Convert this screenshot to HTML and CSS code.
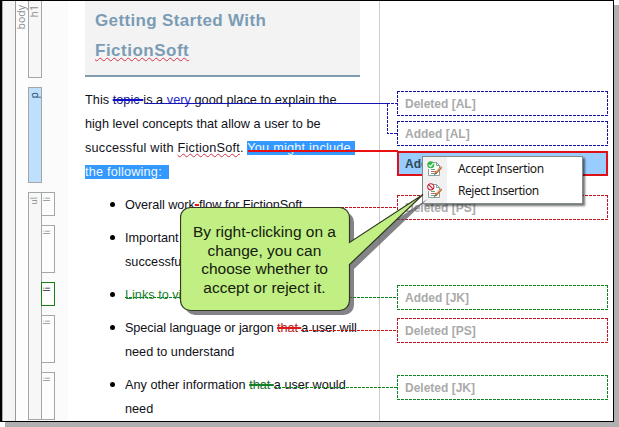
FILE: index.html
```html
<!DOCTYPE html>
<html lang="en">
<head>
<meta charset="utf-8">
<title>Getting Started With FictionSoft</title>
<link rel="stylesheet" href="styles.css">
</head>
<body>
<div class="window">
  <aside class="tags">
    <div class="edge"></div>
    <div class="tag-col body-col"><span class="tag">body</span></div>
    <div class="blocks">
      <div class="block h1"><span class="tag">h1</span></div>
      <div class="block p"><span class="tag">p</span></div>
      <div class="list-tags">
        <div class="block ul"><span class="tag">ul</span></div>
        <div class="items">
          <div class="block li"><span class="tag">li</span></div>
          <div class="block li tall"><span class="tag">li</span></div>
          <div class="block li changed"><span class="tag">li</span></div>
          <div class="block li tall"><span class="tag">li</span></div>
          <div class="block li tall"><span class="tag">li</span></div>
        </div>
      </div>
    </div>
  </aside>
  <main class="doc">
    <h1>Getting Started With<br><span class="product"><span class="spell">FictionSoft</span></span></h1>
    <p><span class="l1">This <s class="al">topic </s>is a <span class="ins-al">very</span> good place to explain the</span><br>high level concepts that allow a user to be<br><span class="l3">successful with <span class="spell">FictionSoft</span>. <mark>You might include&nbsp;</mark></span><br><mark class="l4">the following:&nbsp;&nbsp;</mark></p>
    <ul>
      <li class="i1">Overall work<s class="ps">-</s>flow for FictionSoft</li>
      <li>Important<br>successful</li>
      <li><span class="ins-jk">Links to vi</span></li>
      <li><span class="i4">Special language or jargon <s class="ps">that </s>a user will</span><br>need to understand</li>
      <li>Any other information <s class="jk">that </s>a user would<br>need</li>
    </ul>
  </main>
  <section class="notes">
    <div class="note blue">Deleted [AL]</div>
    <div class="note blue">Added [AL]</div>
    <div class="note active">Added [AL]</div>
    <div class="note red gap-l">Deleted [PS]</div>
    <div class="note green gap-xl">Added [JK]</div>
    <div class="note red gap-s">Deleted [PS]</div>
    <div class="note green gap-m">Deleted [JK]</div>
  </section>
</div>

<svg class="lines" width="619" height="427" viewBox="0 0 619 427" fill="none" shape-rendering="crispEdges">
  <path d="M145 103.5H387" stroke="#1414b4"/>
  <path d="M387 103.5H397M387.5 104V133.5H397" stroke="#1414b4" stroke-dasharray="3 1"/>
  <path d="M248 151H398" stroke="#e81010" stroke-width="2"/>
  <path d="M197 207.5H397" stroke="#c01420" stroke-dasharray="3 1"/>
  <path d="M125 297.5H397" stroke="#0c8420" stroke-dasharray="3 1"/>
  <path d="M301 330.5H397" stroke="#c81414" stroke-dasharray="3 1"/>
  <path d="M274 387.5H397" stroke="#0c8420" stroke-dasharray="3 1"/>
</svg>

<div class="menu">
  <div class="menu-item">
    <svg class="icon" viewBox="0 0 16 16" fill="none">
      <path d="M4.5 1.5H9.5L12.5 4.5V14.5H1.5V8" fill="#fff" stroke="#8aa0a0"/>
      <path d="M9.5 1.5V4.5H12.5" stroke="#8aa0a0"/>
      <path d="M4 8.5H8M4 12.5H9" stroke="#62a878"/><path d="M4 10.5H9" stroke="#c66"/>
      <circle cx="3.8" cy="3.8" r="3.5" fill="#35b44a"/>
      <path d="M2 4L3.5 5.5L6.5 2" stroke="#dfffe0" stroke-width="1.2"/>
      <path d="M8.5 12.5L14.5 6" stroke="#b46432" stroke-width="2.2"/>
      <path d="M9 11.5L14 6" stroke="#f5c684" stroke-width=".8"/>
      <path d="M7.5 13.8L8.7 12.4" stroke="#333"/>
    </svg>
    <span class="accept">Accept Insertion</span>
  </div>
  <div class="menu-item">
    <svg class="icon" viewBox="0 0 16 16" fill="none">
      <path d="M4.5 1.5H9.5L12.5 4.5V14.5H1.5V8" fill="#fff" stroke="#8aa0a0"/>
      <path d="M9.5 1.5V4.5H12.5" stroke="#8aa0a0"/>
      <path d="M4 8.5H8M4 12.5H9" stroke="#62a878"/><path d="M4 10.5H9" stroke="#c66"/>
      <circle cx="3.8" cy="3.8" r="3.1" fill="#fff" stroke="#c8283c" stroke-width="1.1"/>
      <path d="M1.7 1.7L6 6" stroke="#c8283c" stroke-width="1.2"/>
      <path d="M8.5 12.5L14.5 6" stroke="#b46432" stroke-width="2.2"/>
      <path d="M9 11.5L14 6" stroke="#f5c684" stroke-width=".8"/>
      <path d="M7.5 13.8L8.7 12.4" stroke="#333"/>
    </svg>
    <span class="reject">Reject Insertion</span>
  </div>
</div>

<div class="callout">
  <svg class="bubble" width="260" height="130" viewBox="0 0 260 130">
    <path transform="translate(4.5 4.5)" fill="#55555a" fill-opacity=".72" d="M10.5 14.5H159.5A10 10 0 0 1 169.5 24.5V49.5L243 1.5L169.5 71.5V107.5A10 10 0 0 1 159.5 117.5H10.5A10 10 0 0 1 .5 107.5V24.5A10 10 0 0 1 10.5 14.5Z"/>
    <path fill="#c1ef84" stroke="#2f3a20" stroke-width="1.2" d="M10.5 14.5H159.5A10 10 0 0 1 169.5 24.5V49.5L243 1.5L169.5 71.5V107.5A10 10 0 0 1 159.5 117.5H10.5A10 10 0 0 1 .5 107.5V24.5A10 10 0 0 1 10.5 14.5Z"/>
  </svg>
  <div class="callout-text">By right-clicking on a<br>change, you can<br>choose whether to<br>accept or reject it.</div>
</div>
</body>
</html>
```

FILE: styles.css
```css
* { box-sizing: border-box; }
body {
  margin: 0;
  width: 619px;
  height: 427px;
  overflow: hidden;
  position: relative;
  background: #fff;
  font-family: "Liberation Sans", Arial, sans-serif;
  color: #101018;
}
.window {
  width: 614px;
  height: 422px;
  display: flex;
  overflow: hidden;
  border: 1px solid #000;
  border-left-width: 2px;
  background: #fff;
  box-shadow: 5px 5px 0 #b0b0b0;
}

/* structure bars */
.tags { width: 66px; height: 420px; display: flex; flex: none; background: #fbfbfb; }
.edge { width: 14px; background: #f4f4f4; border-left: 1px solid #aaa; border-right: 1px solid #999; }
.tag {
  writing-mode: vertical-rl;
  transform: rotate(180deg);
  font: 10.5px/10px "Open Sans", sans-serif;
  color: #8c8c8c;
}
.body-col { width: 12px; padding-top: 4px; background: #fdfdfd; }
.blocks { width: 28px; display: flex; flex-direction: column; }
.block { width: 14px; padding-top: 4px; border: 1px solid #a2a8a5; background: #f7f7f7; line-height: 0; }
.h1 { height: 77px; border-top: 0; }
.p { height: 96px; margin-top: 9px; background: #bfdfff; }
.p .tag { color: #24486c; }
.list-tags { display: flex; margin-top: 9px; height: 228px; }
.ul { height: 228px; }
.ul .tag, .li .tag { font-size: 9px; line-height: 10px; }
.items { display: flex; flex-direction: column; gap: 9px; margin-left: -1px; }
.li { height: 24px; flex: none; background: #fdfdfd; }
.tall { height: 48px; }
.changed { border-color: #188018; background: #fff; }
.changed .tag { color: #222; }

/* document */
.doc { width: 311px; flex: none; padding-left: 17px; font-size: 12.7px; line-height: 24px; white-space: nowrap; }
h1 {
  width: 275px;
  height: 76px;
  margin: 0;
  padding: 5px 0 0 10px;
  border-bottom: 2px solid #7f9bae;
  background: #f3f3f3;
  color: #7b9cb5;
  font-size: 17px;
  line-height: 30px;
  letter-spacing: .35px;
}
.product { letter-spacing: .5px; }
.spell { text-decoration: underline wavy #d83048 1px; text-underline-offset: 1px; text-decoration-skip-ink: none; }
p { margin: 11px 0 0; }
.l1 { letter-spacing: .04px; }
.l3 { letter-spacing: .23px; }
.l4 { letter-spacing: .2px; }
.i1 { letter-spacing: -.06px; }
.i4 { letter-spacing: -.09px; }
mark { background: #3399ff; color: #f2f8ff; }
s { text-decoration-thickness: 2px; }
.al { text-decoration-color: #1010c8; color: #20208c; }
.ins-al { color: #2424c8; }
.ps { text-decoration-color: #e01818; color: #b02020; }
.jk { text-decoration-color: #148028; color: #246c30; }
.ins-jk { color: #208030; }
ul { margin: 9px 0 0; padding: 0 0 0 40px; display: flex; flex-direction: column; gap: 9px; list-style: none; }
li { position: relative; }
li::before { content: ""; position: absolute; left: -15px; top: 9px; width: 5px; height: 5px; border-radius: 50%; background: #000; }

/* change notes */
.notes { flex: 1; border-left: 1px solid #ccc; padding: 90px 5px 0 17px; display: flex; flex-direction: column; gap: 5px; }
.note {
  --line: #1414a0;
  --h: repeating-linear-gradient(90deg, var(--line) 0 3px, transparent 3px 4px);
  --v: repeating-linear-gradient(180deg, var(--line) 0 3px, transparent 3px 4px);
  height: 25px;
  flex: none;
  padding: 1px 0 0 8px;
  background: var(--h) 0 0 / 100% 1px no-repeat, var(--h) 0 100% / 100% 1px no-repeat, var(--v) 0 0 / 1px 100% no-repeat, var(--v) 100% 0 / 1px 100% no-repeat;
  color: #aaa;
  font: bold 12px/25px "Liberation Sans", Arial, sans-serif;
}
.red { --line: #c01420; }
.green { --line: #0c8420; }
.active { border: 2px solid #e01018; padding-left: 6px; line-height: 21px; background: #99ccff; color: #284858; }
.gap-l { margin-top: 14px; }
.gap-xl { margin-top: 60px; }
.gap-s { margin-top: 3px; }
.gap-m { margin-top: 27px; }

.lines { position: absolute; left: 0; top: 0; }

/* context menu */
.menu {
  position: absolute;
  left: 422px;
  top: 156px;
  width: 161px;
  height: 48px;
  padding: 1px 2px;
  border: 1px solid #7f8c8c;
  background: linear-gradient(90deg, #f1f1f1 24px, #fff 24px);
  box-shadow: 2px 2px 2px rgba(0, 0, 0, .55);
}
.menu-item { height: 22px; display: flex; align-items: center; gap: 15px; padding-left: 2px; font: 12px/22px "Noto Sans", sans-serif; color: #181818; }
.accept { letter-spacing: -.38px; }
.reject { letter-spacing: -.48px; }
.icon { width: 16px; height: 16px; }

/* callout */
.callout { position: absolute; left: 180px; top: 193px; width: 260px; height: 130px; }
.bubble { position: absolute; left: 0; top: 0; }
.callout-text { position: relative; width: 169px; padding-top: 30px; text-align: center; font-size: 15.5px; line-height: 18.5px; color: #14200c; }
```
